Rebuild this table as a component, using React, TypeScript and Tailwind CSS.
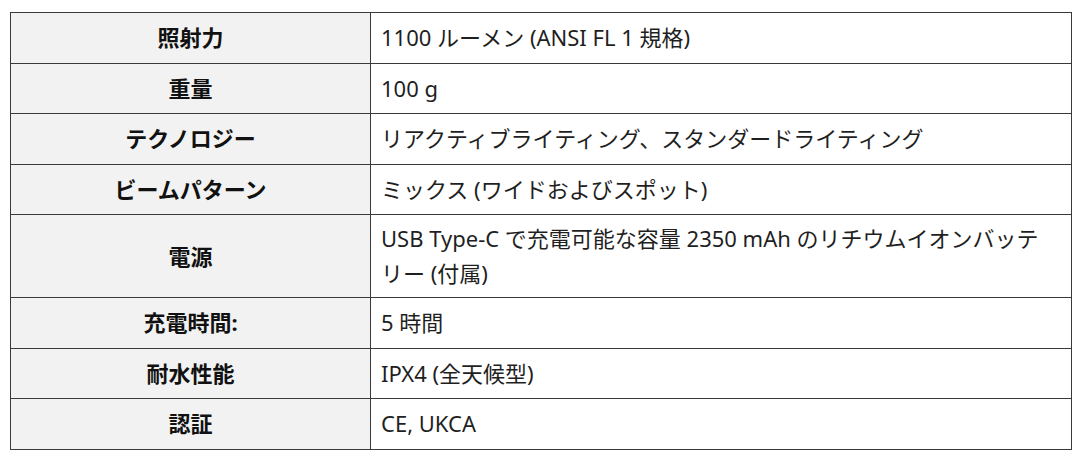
import React from "react";

const rows: [string, React.ReactNode][] = [
  ["照射力", "1100 ルーメン (ANSI FL 1 規格)"],
  ["重量", "100 g"],
  ["テクノロジー", "リアクティブライティング、スタンダードライティング"],
  ["ビームパターン", "ミックス (ワイドおよびスポット)"],
  [
    "電源",
    <>
      USB Type-C で充電可能な容量 2350 mAh のリチウムイオンバッテ
      <br />
      リー (付属)
    </>,
  ],
  ["充電時間:", "5 時間"],
  ["耐水性能", "IPX4 (全天候型)"],
  ["認証", "CE, UKCA"],
];

export default function App() {
  return (
    <div
      className="w-[1080px] h-[457px] bg-white pt-[12px] pl-[10px]"
      style={{ fontFamily: '"Noto Sans", "Noto Sans CJK JP", sans-serif' }}
    >
      <table className="border-collapse w-[1062px] text-[#1f1f1f]">
        <tbody>
          {rows.map(([k, v], i) => (
            <tr key={i} className="h-[50.5px]">
              <th className="w-[360px] border border-[#3a3a3a] bg-[#f2f2f2] text-center font-bold text-[22px] leading-[35px] py-[6px] px-[10px] text-[#111]">
                {k}
              </th>
              <td className="border border-[#3a3a3a] bg-white text-left font-normal text-[22px] leading-[35px] py-[6px] pl-[10px] pr-[6px] whitespace-nowrap">
                {v}
              </td>
            </tr>
          ))}
        </tbody>
      </table>
    </div>
  );
}
